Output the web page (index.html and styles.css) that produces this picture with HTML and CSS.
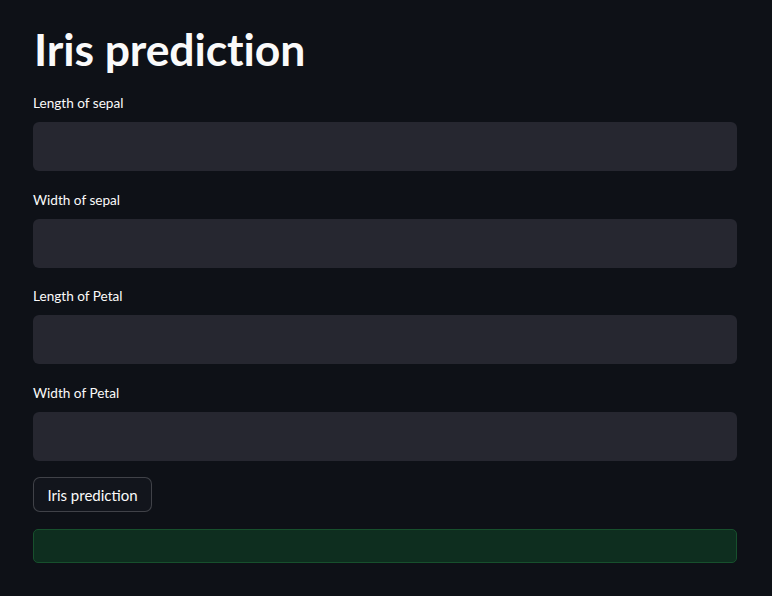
FILE: index.html
```html
<!DOCTYPE html>
<html>
<head>
<meta charset="utf-8">
<link rel="stylesheet" href="styles.css">
</head>
<body>
<main class="app">
  <h1 class="title">Iris prediction</h1>
  <div class="field">
    <label class="label">Length of sepal</label>
    <div class="input"></div>
  </div>
  <div class="field">
    <label class="label">Width of sepal</label>
    <div class="input"></div>
  </div>
  <div class="field">
    <label class="label">Length of Petal</label>
    <div class="input"></div>
  </div>
  <div class="field">
    <label class="label">Width of Petal</label>
    <div class="input"></div>
  </div>
  <button class="btn">Iris prediction</button>
  <div class="success"></div>
</main>
</body>
</html>
```

FILE: styles.css
```css
html, body {
  margin: 0;
  padding: 0;
  background: #0e1117;
  color: #fafafa;
  font-family: Lato, "Noto Sans", sans-serif;
}
.app {
  width: 704px;
  padding: 23px 0 0 33px;
  display: flex;
  flex-direction: column;
}
.title {
  margin: 0;
  font-size: 44.5px;
  font-weight: 700;
  line-height: 52px;
  letter-spacing: -0.1px;
  padding-left: 1px;
}
.field {
  display: flex;
  flex-direction: column;
}
.title + .field { margin-top: 19px; }
.field + .field { margin-top: 19.7px; }
.label {
  font-size: 13.6px;
  line-height: 18px;
  height: 18px;
  margin-bottom: 10px;
}
.input {
  height: 49px;
  background: #262730;
  border-radius: 6px;
}
.btn {
  align-self: flex-start;
  margin-top: 16px;
  width: 119px;
  height: 35px;
  background: #12151c;
  color: #fafafa;
  border: 1px solid rgba(250,250,250,0.2);
  border-radius: 7px;
  font-family: inherit;
  font-size: 15px;
  padding: 0;
}
.success {
  margin-top: 17px;
  height: 34px;
  box-sizing: border-box;
  background: #0e2e1f;
  border: 1px solid #17502d;
  border-radius: 5px;
}
```
